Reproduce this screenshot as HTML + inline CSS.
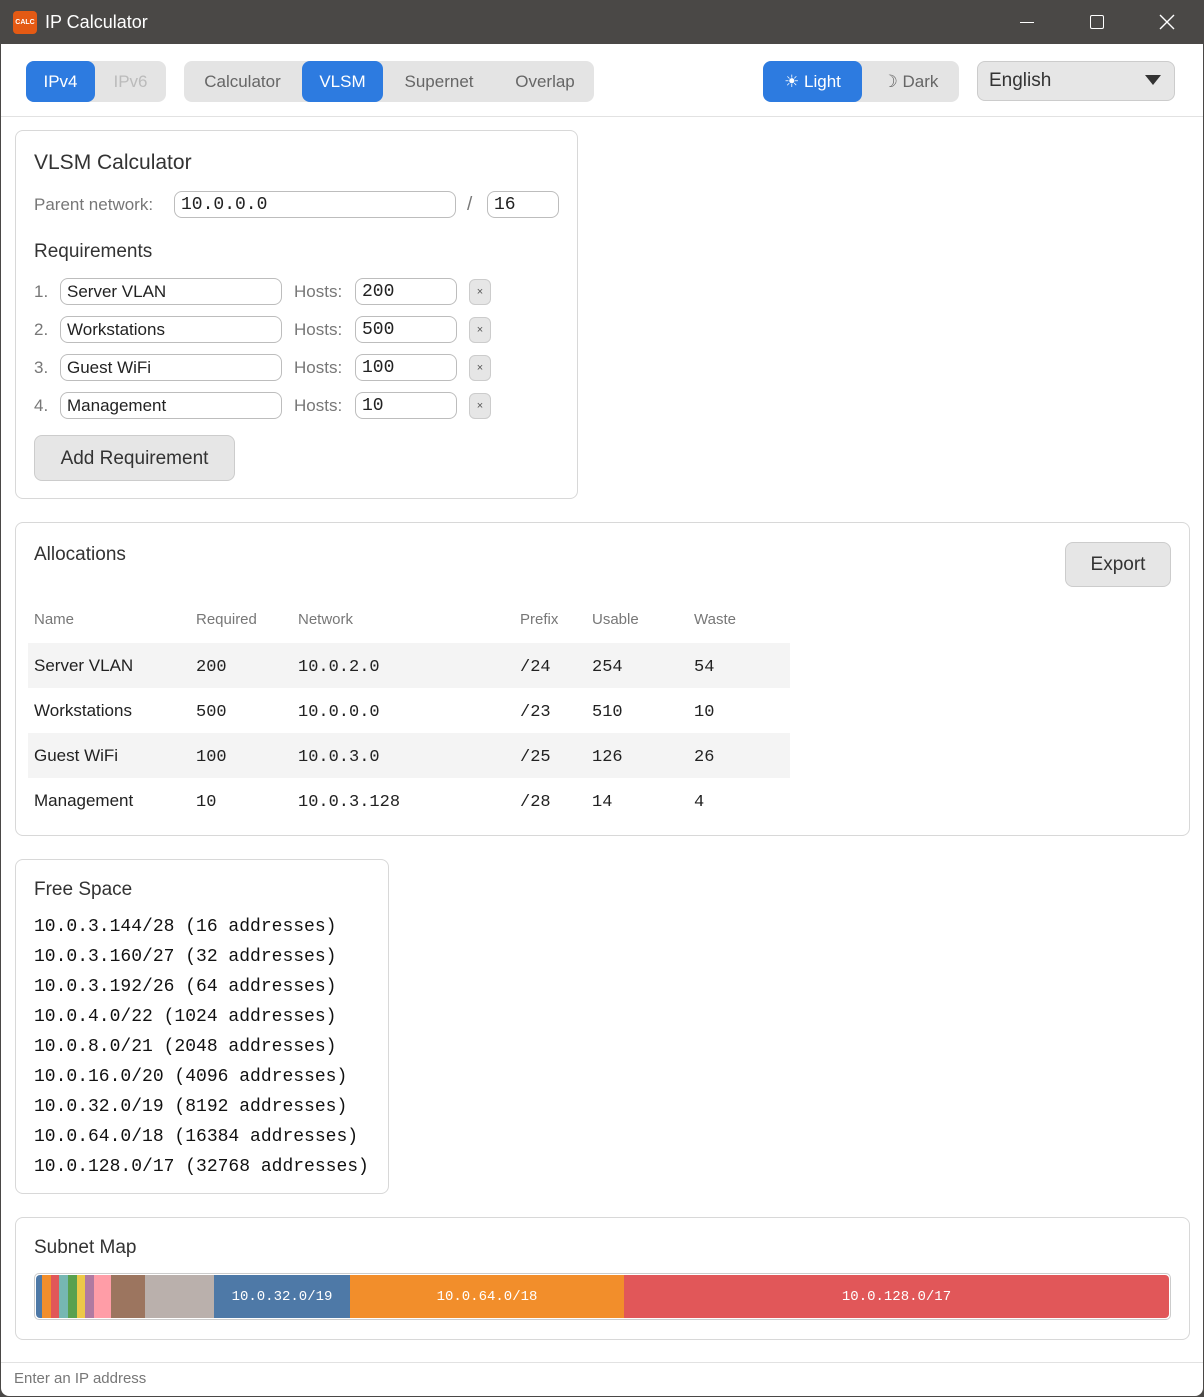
<!DOCTYPE html>
<html><head><meta charset="utf-8"><style>
*{box-sizing:border-box;margin:0;padding:0}
body{width:1204px;height:1397px;background:#4a4846;font-family:"Liberation Sans",sans-serif;color:#333;position:relative;overflow:hidden}
.win{position:absolute;left:1px;top:44px;width:1202px;height:1352px;background:#fff;border-radius:0 0 8px 8px}
.a{position:absolute}
.mono{font-family:"Liberation Mono",monospace}
.card{position:absolute;border:1px solid #d8d8d8;border-radius:8px;background:#fff}
.seg{position:absolute;background:#e4e4e4;border-radius:8px;height:41px}
.btn{position:absolute;height:41px;line-height:41px;font-size:17px;color:#666;text-align:center}
.on{background:#2d7be0;color:#fff;border-radius:8px}
.inp{position:absolute;border:1px solid #bdbdbd;border-radius:8px;height:27px;line-height:25px;padding-left:6px;font-size:17px;color:#222}
.inp.mono{font-size:18px;line-height:27px}
.lbl{position:absolute;font-size:17px;color:#777}
.x{position:absolute;width:22px;height:26px;border:1px solid #ccc;background:#e6e6e6;border-radius:6px;font-size:11px;text-align:center;line-height:24px;color:#555}
.th{position:absolute;font-size:15px;color:#777;top:611px}
.td{position:absolute;font-size:17px;color:#222;margin-top:1px}
.td.mono{margin-top:3px}
.fs{position:absolute;left:34px;font-size:18px;color:#111;font-family:"Liberation Mono",monospace;margin-top:3px}
.m{position:absolute;top:1275px;height:43px}
</style></head><body>
<div class="a" style="left:13px;top:11px;width:24px;height:23px;background:#e45a14;border-radius:4px;color:#fff;font-size:7px;font-weight:bold;text-align:center;line-height:23px">CALC</div>
<div class="a" style="left:45px;top:12px;font-size:18px;color:#fff">IP Calculator</div>
<div class="a" style="left:1020px;top:22px;width:14px;height:1px;background:#fff"></div>
<div class="a" style="left:1090px;top:15px;width:14px;height:14px;border:1.5px solid #fff;border-radius:2px"></div>
<svg class="a" style="left:1159px;top:14px" width="16" height="16"><path d="M1 1L15 15M15 1L1 15" stroke="#fff" stroke-width="1.4"/></svg>
<div class="win"></div>
<div class="seg" style="left:26px;top:61px;width:140px"></div>
<div class="btn on" style="left:26px;top:61px;width:69px">IPv4</div>
<div class="btn" style="left:95px;top:61px;width:71px;color:#bbb">IPv6</div>
<div class="seg" style="left:184px;top:61px;width:410px"></div>
<div class="btn" style="left:190px;top:61px;width:105px">Calculator</div>
<div class="btn on" style="left:302px;top:61px;width:81px">VLSM</div>
<div class="btn" style="left:390px;top:61px;width:98px">Supernet</div>
<div class="btn" style="left:500px;top:61px;width:90px">Overlap</div>
<div class="seg" style="left:763px;top:61px;width:196px"></div>
<div class="btn on" style="left:763px;top:61px;width:99px">☀ Light</div>
<div class="btn" style="left:862px;top:61px;width:97px">☽ Dark</div>
<div class="a" style="left:977px;top:61px;width:198px;height:40px;background:#e6e6e6;border:1px solid #ccc;border-radius:8px;font-size:19px;line-height:38px;padding-left:11px;color:#333">English</div>
<svg class="a" style="left:1145px;top:75px" width="16" height="11"><path d="M0 0H16L8 10Z" fill="#333"/></svg>
<div class="a" style="left:1px;top:116px;width:1202px;height:1px;background:#e2e2e2"></div>

<div class="card" style="left:15px;top:130px;width:563px;height:369px"></div>
<div class="a" style="left:34px;top:151px;font-size:21px;color:#333">VLSM Calculator</div>
<div class="lbl" style="left:34px;top:195px">Parent network:</div>
<div class="inp mono" style="left:174px;top:191px;width:282px">10.0.0.0</div>
<div class="lbl" style="left:467px;top:194px;font-size:19px">/</div>
<div class="inp mono" style="left:487px;top:191px;width:72px">16</div>
<div class="a" style="left:34px;top:241px;font-size:19px;color:#333">Requirements</div>

<div class="lbl" style="left:34px;top:282px">1.</div><div class="inp" style="left:60px;top:278px;width:222px">Server VLAN</div><div class="lbl" style="left:294px;top:282px">Hosts:</div><div class="inp mono" style="left:355px;top:278px;width:102px">200</div><div class="x" style="left:469px;top:279px">×</div>
<div class="lbl" style="left:34px;top:320px">2.</div><div class="inp" style="left:60px;top:316px;width:222px">Workstations</div><div class="lbl" style="left:294px;top:320px">Hosts:</div><div class="inp mono" style="left:355px;top:316px;width:102px">500</div><div class="x" style="left:469px;top:317px">×</div>
<div class="lbl" style="left:34px;top:358px">3.</div><div class="inp" style="left:60px;top:354px;width:222px">Guest WiFi</div><div class="lbl" style="left:294px;top:358px">Hosts:</div><div class="inp mono" style="left:355px;top:354px;width:102px">100</div><div class="x" style="left:469px;top:355px">×</div>
<div class="lbl" style="left:34px;top:396px">4.</div><div class="inp" style="left:60px;top:392px;width:222px">Management</div><div class="lbl" style="left:294px;top:396px">Hosts:</div><div class="inp mono" style="left:355px;top:392px;width:102px">10</div><div class="x" style="left:469px;top:393px">×</div>
<div class="a" style="left:34px;top:435px;width:201px;height:46px;background:#e6e6e6;border:1px solid #ccc;border-radius:8px;font-size:19px;line-height:45px;text-align:center;color:#333">Add Requirement</div>

<div class="card" style="left:15px;top:522px;width:1175px;height:314px"></div>
<div class="a" style="left:34px;top:544px;font-size:19px;color:#333">Allocations</div>
<div class="a" style="left:1065px;top:542px;width:106px;height:45px;background:#e6e6e6;border:1px solid #ccc;border-radius:8px;font-size:19px;line-height:44px;text-align:center;color:#333">Export</div>
<div class="th" style="left:34px">Name</div><div class="th" style="left:196px">Required</div><div class="th" style="left:298px">Network</div><div class="th" style="left:520px">Prefix</div><div class="th" style="left:592px">Usable</div><div class="th" style="left:694px">Waste</div>
<div class="a" style="left:28px;top:643px;width:762px;height:45px;background:#f4f4f4"></div>
<div class="a" style="left:28px;top:733px;width:762px;height:45px;background:#f4f4f4"></div>
<div class="td" style="left:34px;top:655px">Server VLAN</div><div class="td mono" style="left:196px;top:655px">200</div><div class="td mono" style="left:298px;top:655px">10.0.2.0</div><div class="td mono" style="left:520px;top:655px">/24</div><div class="td mono" style="left:592px;top:655px">254</div><div class="td mono" style="left:694px;top:655px">54</div>
<div class="td" style="left:34px;top:700px">Workstations</div><div class="td mono" style="left:196px;top:700px">500</div><div class="td mono" style="left:298px;top:700px">10.0.0.0</div><div class="td mono" style="left:520px;top:700px">/23</div><div class="td mono" style="left:592px;top:700px">510</div><div class="td mono" style="left:694px;top:700px">10</div>
<div class="td" style="left:34px;top:745px">Guest WiFi</div><div class="td mono" style="left:196px;top:745px">100</div><div class="td mono" style="left:298px;top:745px">10.0.3.0</div><div class="td mono" style="left:520px;top:745px">/25</div><div class="td mono" style="left:592px;top:745px">126</div><div class="td mono" style="left:694px;top:745px">26</div>
<div class="td" style="left:34px;top:790px">Management</div><div class="td mono" style="left:196px;top:790px">10</div><div class="td mono" style="left:298px;top:790px">10.0.3.128</div><div class="td mono" style="left:520px;top:790px">/28</div><div class="td mono" style="left:592px;top:790px">14</div><div class="td mono" style="left:694px;top:790px">4</div>

<div class="card" style="left:15px;top:859px;width:374px;height:335px"></div>
<div class="a" style="left:34px;top:879px;font-size:19px;color:#333">Free Space</div>
<div class="fs" style="top:914px">10.0.3.144/28 (16 addresses)</div>
<div class="fs" style="top:944px">10.0.3.160/27 (32 addresses)</div>
<div class="fs" style="top:974px">10.0.3.192/26 (64 addresses)</div>
<div class="fs" style="top:1004px">10.0.4.0/22 (1024 addresses)</div>
<div class="fs" style="top:1034px">10.0.8.0/21 (2048 addresses)</div>
<div class="fs" style="top:1064px">10.0.16.0/20 (4096 addresses)</div>
<div class="fs" style="top:1094px">10.0.32.0/19 (8192 addresses)</div>
<div class="fs" style="top:1124px">10.0.64.0/18 (16384 addresses)</div>
<div class="fs" style="top:1154px">10.0.128.0/17 (32768 addresses)</div>

<div class="card" style="left:15px;top:1217px;width:1175px;height:123px"></div>
<div class="a" style="left:34px;top:1237px;font-size:19px;color:#333">Subnet Map</div>
<div class="a" style="left:34px;top:1273px;width:1137px;height:47px;border:1.5px solid #ccc;border-radius:5px"></div>
<div class="m" style="left:36px;width:6px;background:#4e79a7;border-radius:4px 0 0 4px"></div>
<div class="m" style="left:42px;width:9px;background:#f28e2b"></div>
<div class="m" style="left:51px;width:8px;background:#e15759"></div>
<div class="m" style="left:59px;width:9px;background:#76b7b2"></div>
<div class="m" style="left:68px;width:9px;background:#59a14f"></div>
<div class="m" style="left:77px;width:8px;background:#edc948"></div>
<div class="m" style="left:85px;width:9px;background:#b07aa1"></div>
<div class="m" style="left:94px;width:17px;background:#ff9da7"></div>
<div class="m" style="left:111px;width:34px;background:#9c755f"></div>
<div class="m" style="left:145px;width:69px;background:#bab0ac"></div>
<div class="m mono" style="left:214px;width:136px;background:#4e79a7;color:#fff;font-size:14px;text-align:center;line-height:45px">10.0.32.0/19</div>
<div class="m mono" style="left:350px;width:274px;background:#f28e2b;color:#fff;font-size:14px;text-align:center;line-height:45px">10.0.64.0/18</div>
<div class="m mono" style="left:624px;width:545px;background:#e15759;color:#fff;font-size:14px;text-align:center;line-height:45px;border-radius:0 4px 4px 0">10.0.128.0/17</div>

<div class="a" style="left:1px;top:1362px;width:1202px;height:1px;background:#e2e2e2"></div>
<div class="a" style="left:14px;top:1370px;font-size:15px;color:#777">Enter an IP address</div>
</body></html>
